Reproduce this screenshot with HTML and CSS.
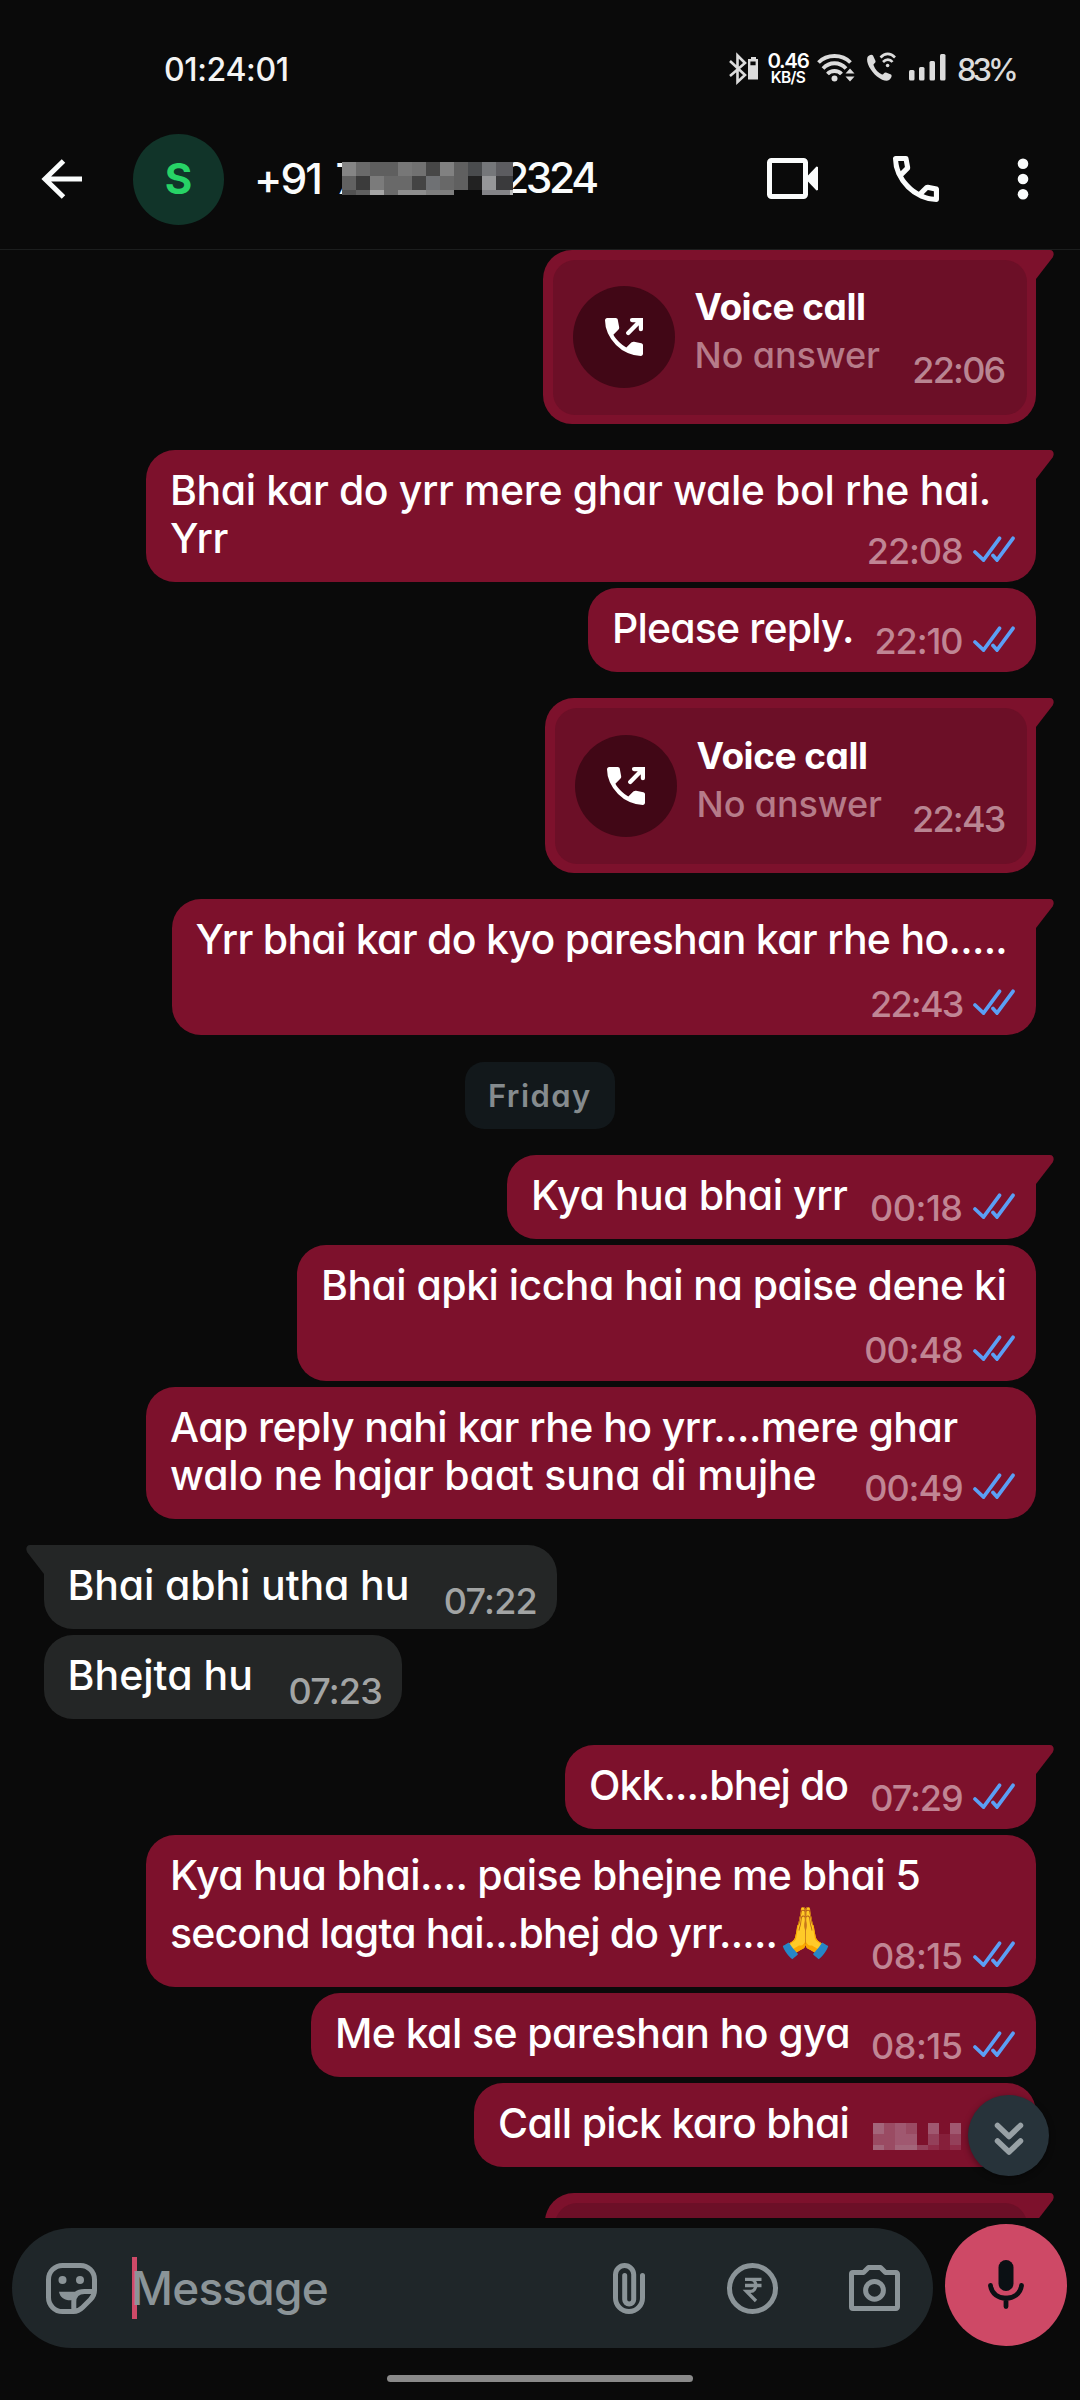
FILE: index.html
```html
<!DOCTYPE html>
<html lang="en">
<head>
<meta charset="utf-8">
<title>Chat</title>
<link rel="stylesheet" href="styles.css">
</head>
<body>
<svg class="defs" aria-hidden="true">
  <symbol id="tail" viewBox="0 0 18 30"><path d="M0 0H14C17.8 0 18.6 4.5 16.6 7.6L0 29Z"/></symbol>
  <symbol id="read" viewBox="0 0 42 26"><path d="M2 16L10.500 24 26.500 2.300M20 19.500L24 24 40 2.300"/></symbol>
  <symbol id="outgoing" viewBox="3 3 18 18">
    <path d="M19.95 21Q16.825 21 13.775 19.638T8.225 15.775T4.362 10.225Q3 7.175 3 4.05Q3 3.6 3.3 3.3T4.05 3H8.1Q8.45 3 8.725 3.238T9.05 3.8L9.7 7.3Q9.75 7.7 9.675 7.975T9.4 8.45L6.975 10.9Q7.475 11.825 8.163 12.688T9.675 14.35Q10.45 15.125 11.3 15.788T13.1 17L15.45 14.65Q15.675 14.425 16.038 14.313T16.75 14.25L20.2 14.95Q20.55 15.05 20.775 15.313T21 15.9V19.95Q21 20.4 20.7 20.7T19.95 21"/>
    <path class="arrow" d="M15.8 4H20V8.3M19.8 4.2L14 10.1"/>
  </symbol>
</svg>

<div class="phone">
  <div class="status">
    <span class="clock">01:24:01</span>
    <svg class="bt" viewBox="0 0 30 32"><path class="line" d="M1 8L16 22 8.5 29V2.5L16 10 1 23"/><path d="M22 4h5v2h2v20.5h-10V6h3zM21.4 8.4v3.8h5.2V8.4z" fill-rule="evenodd"/></svg>
    <span class="speed"><b>0.46</b><i>KB/S</i></span>
    <svg class="wifi" viewBox="0 0 38 32"><path class="arc" d="M1.5 9.5C10 .8 25 .8 33.5 9.5M6 15.5C12.500 8.500 22.500 8.500 29 15.500M10.500 21C14 17 21 17 24.500 21"/><circle cx="17.500" cy="25.500" r="3"/><path d="M28.500 20.500l4.500-5 4.500 5zM28.500 23.500l4.500 5 4.500-5z"/></svg>
    <svg class="wcall" viewBox="0 0 30 32"><path d="M1.500 4C2.500 2 6 .8 7 2.500L9.500 8C10 10 7.500 10.500 7.500 12 9 16.500 12.500 20 16 21.500 17.500 22 18 19 20 19.500L25 21.500C26.500 22.500 25 26 23 27 21 28.500 16 27.500 11 23.500 5 18.500-.5 9.500 1.500 4Z"/><path class="line" d="M14.500 4.500C19-.3 24.500-.3 29 4.500M17 9C20 5.800 24 5.800 26.500 9"/><circle cx="21.600" cy="12.500" r="1.800"/></svg>
    <svg class="signal" viewBox="0 0 37 32"><rect y="17" width="5.500" height="10.500" rx="1.500"/><rect x="10" y="14" width="5.500" height="13.500" rx="1.500"/><rect x="20.500" y="8" width="5.500" height="19.500" rx="1.500"/><rect x="31" y="1" width="5.500" height="26.500" rx="1.500"/></svg>
    <span class="battery">83%</span>
  </div>

  <header class="bar">
    <svg class="back" viewBox="0 0 41 40"><path d="M4 20H41M22.500 2L4 20 22.500 38"/></svg>
    <div class="avatar">S</div>
    <div class="title"><span class="code">+91 7</span>
      <svg class="mask" viewBox="0 0 171 33" shape-rendering="crispEdges">
        <path fill="#858585" d="M0 0h14v14H0z"/><path fill="#6a6a6a" d="M14 0h14v14H14z"/><path fill="#5f5f5f" d="M28 0h28v14H28z"/><path fill="#777" d="M56 0h14v14H56z"/><path fill="#717171" d="M70 0h14v14H70z"/><path fill="#474747" d="M84 0h14v14H84z"/><path fill="#818181" d="M98 0h14v14H98z"/><path fill="#606060" d="M112 0h14v14h-14z"/><path fill="#4a4c4e" d="M126 0h14v14h-14z"/><path fill="#75777a" d="M140 0h14v14h-14z"/><path fill="#5c5c60" d="M154 0h17v14h-17z"/>
        <path fill="#616161" d="M0 14h14v14H0z"/><path fill="#3b3b3b" d="M14 14h14v14H14z"/><path fill="#7b7b7b" d="M28 14h14v14H28z"/><path fill="#696969" d="M42 14h28v14H42z"/><path fill="#444" d="M70 14h14v14H70z"/><path fill="#6f7174" d="M84 14h14v14H84z"/><path fill="#686868" d="M98 14h14v14H98z"/><path fill="#606060" d="M112 14h14v14h-14z"/><path fill="#222" d="M126 14h14v14h-14z"/><path fill="#969799" d="M140 14h14v14h-14z"/><path fill="#3a3a3c" d="M154 14h17v14h-17z"/>
        <path fill="#515151" d="M0 28h14v5H0z"/><path fill="#606060" d="M14 28h14v5H14z"/><path fill="#a5a5a5" d="M28 28h14v5H28z"/><path fill="#6a6a6a" d="M42 28h14v5H42z"/><path fill="#8e8e8e" d="M56 28h28v5H56z"/><path fill="#7e7e7e" d="M84 28h28v5H84z"/><path fill="#0a0a0a" d="M112 28h28v5h-28z"/><path fill="#848488" d="M140 28h28v5h-28z"/><path fill="#bbb" d="M168 28h3v5h-3z"/>
      </svg>
      <span class="last">2324</span></div>
    <svg class="video" viewBox="0 0 51 41"><rect x="2.500" y="2.500" width="36" height="36" rx="2"/><path d="M40 18.500L49.500 8.500 51 9V32l-1.500.5L40 22.500z"/></svg>
    <svg class="call" viewBox="3 3 18 18"><path fill-rule="evenodd" d="M19.95 21Q16.825 21 13.775 19.638T8.225 15.775T4.362 10.225Q3 7.175 3 4.05Q3 3.6 3.3 3.3T4.05 3H8.1Q8.45 3 8.725 3.238T9.05 3.8L9.7 7.3Q9.75 7.7 9.675 7.975T9.4 8.45L6.975 10.9Q7.475 11.825 8.163 12.688T9.675 14.35Q10.45 15.125 11.3 15.788T13.1 17L15.45 14.65Q15.675 14.425 16.038 14.313T16.75 14.25L20.2 14.95Q20.55 15.05 20.775 15.313T21 15.9V19.95Q21 20.4 20.7 20.7T19.95 21M6.025 9L7.675 7.35 7.25 5H5.025Q5.15 6.025 5.375 7.025T6.025 9M14.975 17.95Q15.95 18.375 16.963 18.625T19 18.95V16.75L16.65 16.275Z"/></svg>
    <svg class="more" viewBox="0 0 12 42"><circle cx="6" cy="5.700" r="5.300"/><circle cx="6" cy="21" r="5.300"/><circle cx="6" cy="36.300" r="5.300"/></svg>
  </header>

  <main class="chat">
    <div class="msg out first voice">
      <svg class="tail"><use href="#tail"/></svg>
      <div class="card">
        <div class="disc"><svg><use href="#outgoing"/></svg></div>
        <div class="info"><strong>Voice call</strong><span>No answer</span></div>
        <time class="tight">22:06</time>
      </div>
    </div>
    <div class="msg out first two m-ghar"><svg class="tail"><use href="#tail"/></svg>
      <p>Bhai kar do yrr mere ghar wale bol rhe hai.<br>Yrr</p>
      <div class="meta"><time class="narrow">22:08</time><svg><use href="#read"/></svg></div></div>
    <div class="msg out m-please">
      <p>Please reply.</p>
      <div class="meta"><time class="narrow">22:10</time><svg><use href="#read"/></svg></div></div>
    <div class="msg out first voice second"><svg class="tail"><use href="#tail"/></svg>
      <div class="card">
        <div class="disc"><svg><use href="#outgoing"/></svg></div>
        <div class="info"><strong>Voice call</strong><span>No answer</span></div>
        <time class="tight">22:43</time>
      </div>
    </div>
    <div class="msg out first tall m-kyo"><svg class="tail"><use href="#tail"/></svg>
      <p>Yrr bhai kar do kyo pareshan kar rhe ho.....</p>
      <div class="meta"><time class="tight">22:43</time><svg><use href="#read"/></svg></div></div>

    <div class="day">Friday</div>

    <div class="msg out first m-hua"><svg class="tail"><use href="#tail"/></svg>
      <p>Kya hua bhai yrr</p>
      <div class="meta"><time>00:18</time><svg><use href="#read"/></svg></div></div>
    <div class="msg out tall m-apki">
      <p>Bhai apki iccha hai na paise dene ki</p>
      <div class="meta"><time class="narrow">00:48</time><svg><use href="#read"/></svg></div></div>
    <div class="msg out two m-reply">
      <p>Aap reply nahi kar rhe ho yrr....mere ghar<br><span class="loose">walo ne hajar baat suna di mujhe</span></p>
      <div class="meta"><time class="narrow">00:49</time><svg><use href="#read"/></svg></div></div>

    <div class="msg in first m-abhi"><svg class="tail"><use href="#tail"/></svg>
      <p>Bhai abhi utha hu</p>
      <div class="meta"><time>07:22</time></div></div>
    <div class="msg in m-bhejta">
      <p>Bhejta hu</p>
      <div class="meta"><time>07:23</time></div></div>

    <div class="msg out first m-okk"><svg class="tail"><use href="#tail"/></svg>
      <p>Okk....bhej do</p>
      <div class="meta"><time class="narrow">07:29</time><svg><use href="#read"/></svg></div></div>
    <div class="msg out emoji m-second">
      <p>Kya hua bhai.... paise bhejne me bhai 5<span class="line">second lagta hai...bhej do yrr.....<span class="pray">🙏</span></span></p>
      <div class="meta"><time>08:15</time><svg><use href="#read"/></svg></div></div>
    <div class="msg out m-kal">
      <p>Me kal se pareshan ho gya</p>
      <div class="meta"><time>08:15</time><svg><use href="#read"/></svg></div></div>
    <div class="msg out m-pick">
      <p>Call pick karo bhai</p>
      <svg class="blot" viewBox="0 0 88 27" shape-rendering="crispEdges">
        <path fill="#a3657a" d="M0 0h11v11H0zM0 22h11v5H0zM22 22h22v5H22z"/><path fill="#9a4b63" d="M11 0h11v27H11zM33 0h11v11H33zM0 11h11v11H0z"/><path fill="#a05870" d="M22 0h11v22H22zM33 11h11v11H33zM55 0h11v11H55zM77 0h11v11H77z"/><path fill="#94405a" d="M44 22h11v5H44zM55 11h11v11H55zM77 11h11v11H77z"/><path fill="#8f2c48" d="M55 22h11v5H55zM77 22h11v5H77z"/><path fill="#861f3a" d="M66 11h11v16H66z"/>
      </svg></div>

    <div class="msg out first voice second"><svg class="tail"><use href="#tail"/></svg><div class="card"></div></div>

    <div class="jump"><svg viewBox="0 0 30 34"><path d="M3.500 3.500L15 14.500 26.500 3.500M3.500 19L15 30 26.500 19"/></svg></div>
  </main>

  <footer class="foot">
    <div class="compose">
      <div class="field">
        <svg class="sticker" viewBox="0 0 51 51"><path class="o" d="M16.500 2.500h18a14 14 0 0 1 14 14v11c0 4-1.500 6.500-4 9l-8 8c-2.500 2.500-5 4-9 4h-11a14 14 0 0 1-14-14v-18a14 14 0 0 1 14-14zM48 28.500H38.500q-10.700 0-10.700 10.500V48"/><path d="M13 28.700H34L28 37C19.500 38.500 14 34.500 13 28.700z"/><circle cx="16.500" cy="17" r="4"/><circle cx="34" cy="17" r="4"/></svg>
        <div class="input"><i></i><span>Message</span></div>
        <svg class="clip" viewBox="0 0 32 51"><path class="o" d="M29.500 12.500V35a13.500 13.500 0 0 1-27 0V11.600a9.100 9.100 0 0 1 18.200 0V36.500a4.500 4.500 0 0 1-9 0V12.500"/></svg>
        <svg class="rupee" viewBox="0 0 51 51"><circle class="o" cx="25.500" cy="25.500" r="23"/><path class="thin" d="M18 16.300H34.500M18 22.500H34.500M18 16.300H23.500C30.500 16.300 30.500 28.300 23.500 28.300H19.500L29 38"/></svg>
        <svg class="camera" viewBox="0 0 51 46"><path class="o" d="M4 7.500H14.500L19.500 2.500H31.500L36.500 7.500H47A1.500 1.500 0 0 1 48.500 9V42A1.500 1.500 0 0 1 47 43.500H4A1.500 1.500 0 0 1 2.500 42V9A1.500 1.500 0 0 1 4 7.500Z"/><circle class="o" cx="25.500" cy="25.300" r="8.900"/></svg>
      </div>
      <div class="mic"><svg viewBox="0 0 36 49"><rect x="10.500" y="0" width="15" height="31" rx="7.500"/><path d="M2.500 25.500C4.500 42.500 31.500 42.500 33.500 25.500M18 38V46.500"/></svg></div>
    </div>
    <div class="home"></div>
  </footer>
</div>
</body>
</html>
```
FILE: styles.css
```css
* { box-sizing: border-box; }
body {
  margin: 0;
  background: #0a0a0a;
  color: #fff;
  font-family: Inter, "Noto Sans", sans-serif;
  font-feature-settings: "cv11";
}
svg { display: block; flex: none; overflow: visible; }
.defs { position: absolute; width: 0; height: 0; }
.phone {
  width: 1080px;
  height: 2400px;
  display: flex;
  flex-direction: column;
  overflow: hidden;
}

/* status bar */
.status {
  height: 110px;
  padding: 28px 65px 0 164px;
  display: flex;
  align-items: center;
  fill: #dcdcdc;
  color: #dcdcdc;
}
.status svg { height: 32px; }
.status .line { fill: none; stroke: #dcdcdc; stroke-width: 2.6; }
.status .arc { fill: none; stroke: #dcdcdc; stroke-width: 3.8; }
.clock { color: #f4f4f4; font-size: 32px; font-weight: 500; letter-spacing: -.35px; margin-right: auto; }
.bt { width: 30px; margin-right: 8px; }
.speed { width: 42px; margin-right: 8px; display: flex; flex-direction: column; align-items: center; color: #fff; white-space: nowrap; }
.speed b { font-size: 20.5px; font-weight: 600; letter-spacing: -1.3px; line-height: 18px; }
.speed i { font-size: 15.5px; font-style: normal; font-weight: 600; letter-spacing: -.7px; line-height: 16px; }
.wifi { width: 38px; margin-right: 11px; }
.wcall { width: 30px; margin-right: 13px; }
.signal { width: 37px; margin-right: 11px; }
.battery { width: 58px; font-size: 31px; font-weight: 500; letter-spacing: -4px; white-space: nowrap; }

/* app bar */
.bar {
  height: 140px;
  padding: 0 51px 2px 41px;
  display: flex;
  align-items: center;
  border-bottom: 1px solid #1c1e1e;
  fill: #fafcfc;
}
.back { width: 41px; height: 40px; fill: none; stroke: #fafcfc; stroke-width: 5; margin-right: 51px; }
.avatar {
  width: 91px; height: 91px; border-radius: 50%;
  background: #113429; color: #27d366;
  font-size: 42px; font-weight: 700; line-height: 90px; text-align: center;
  margin: 2px 31px 0 0;
}
.title { display: flex; align-items: center; margin-right: auto; font-size: 42.5px; font-weight: 500; line-height: 50px; white-space: nowrap; color: #fafcfc; }
.code { width: 88px; margin-left: -1px; letter-spacing: -1.9px; word-spacing: 5px; }
.mask { width: 171px; height: 33px; margin-top: -1px; z-index: 1; }
.last { margin-left: -10px; margin-top: -1px; letter-spacing: -3.4px; }
.video { width: 51px; height: 41px; margin-right: 75px; }
.video rect { fill: none; stroke: #fafcfc; stroke-width: 5; }
.call { width: 46px; height: 46px; margin-right: 78px; }
.more { width: 12px; height: 42px; }

/* conversation */
.chat {
  position: relative;
  height: 1968px;
  padding: 0 44px 0 43.5px;
  display: flex;
  flex-direction: column;
  overflow: hidden;
}
.msg {
  position: relative;
  flex: none;
  height: 84px;
  margin-top: 6px;
  padding: 16px 21.5px 13px 24px;
  border-radius: 29px;
  display: grid;
}
.msg.first { margin-top: 26px; }
.msg.first:first-child { margin-top: 0; }
.out { align-self: flex-end; background: #7d112c; fill: #7d112c; }
.in { align-self: flex-start; background: #242626; fill: #242626; padding: 16px 20px 10px 24px; }
.out.first { border-top-right-radius: 0; }
.in.first { border-top-left-radius: 0; }
.tail { position: absolute; top: 0; right: -17.5px; width: 18px; height: 30px; }
.in .tail { right: auto; left: -17.5px; transform: scaleX(-1); }
.msg p { grid-area: 1 / 1; margin: 0; font-size: 41px; font-weight: 540; line-height: 48px; white-space: nowrap; }
.meta { grid-area: 1 / 1; place-self: end; display: flex; align-items: flex-end; gap: 10px; }
.meta svg { width: 42px; height: 26px; margin-bottom: 7px; fill: none; stroke: #5b9ff5; stroke-width: 3.7; stroke-linecap: round; stroke-linejoin: miter; }
time { font-size: 36px; font-weight: 500; line-height: 36px; letter-spacing: -.5px; color: #c08594; }
time.narrow { letter-spacing: -1.1px; }
time.tight { letter-spacing: -1.8px; }
.in time { color: #a2a4a4; letter-spacing: -.8px; }
.two { height: 132px; }
.tall { height: 136px; }
.emoji { height: 152px; }
.line { display: block; line-height: 68px; letter-spacing: -.82px; }
.pray { display: inline-block; height: 48px; margin-left: -2px; font-size: 49px; line-height: 48px; vertical-align: -1px; }

.m-ghar { width: 890px; letter-spacing: -.38px; }
.m-please { width: 448px; letter-spacing: -.85px; }
.m-kyo { width: 864.500px; letter-spacing: -.71px; }
.m-hua { width: 529px; letter-spacing: -.45px; }
.m-apki { width: 739px; letter-spacing: -.53px; }
.m-reply { width: 890px; letter-spacing: -.57px; }
.m-reply .loose { letter-spacing: -.18px; }
.m-abhi { width: 513.500px; letter-spacing: -.12px; }
.m-bhejta { width: 358.500px; letter-spacing: .03px; }
.m-okk { width: 471px; letter-spacing: -.95px; }
.m-second { width: 890px; letter-spacing: -.58px; }
.m-kal { width: 725px; letter-spacing: -.58px; }
.m-pick { width: 562px; letter-spacing: -.67px; }

.blot { grid-area: 1 / 1; place-self: end; width: 88px; height: 27px; margin: 0 54px 4px 0; }

/* voice call bubble */
.voice { width: 493px; height: 174px; padding: 9.500px; }
.voice.second { width: 491px; height: 175px; }
.card { border-radius: 22px; background: #6c0f27; padding: 0 22px 0 20px; display: flex; align-items: center; }
.disc { width: 102px; height: 102px; border-radius: 50%; background: #410716; display: grid; place-items: center; margin-right: 20px; }
.disc svg { width: 38px; height: 38px; fill: #fff; }
.arrow { fill: none; stroke: #fff; stroke-width: 2; stroke-linecap: round; }
.info { display: flex; flex-direction: column; padding-bottom: 13px; margin-right: auto; }
.info strong { font-size: 37px; line-height: 49px; letter-spacing: -.48px; }
.info span { font-size: 36px; line-height: 48px; font-weight: 500; letter-spacing: -.1px; color: #b67b89; }
.card time { align-self: flex-end; margin-bottom: 26.500px; color: #b98592; }

.day {
  align-self: center;
  flex: none;
  width: 150px; height: 67px;
  margin-top: 27px;
  border-radius: 19px;
  background: #12181b;
  color: #858b8e;
  font-size: 31px; font-weight: 600; line-height: 68px; text-align: center; letter-spacing: 1.4px;
}

.jump {
  position: absolute;
  left: 968px; top: 1845px;
  width: 81px; height: 81px; border-radius: 50%;
  background: #27333a;
  box-shadow: 0 2px 6px rgba(0, 0, 0, .4);
  display: grid; place-items: center;
}
.jump svg { width: 30px; height: 34px; fill: none; stroke: #98a1a5; stroke-width: 5.500; stroke-linecap: round; stroke-linejoin: round; margin-top: 6px; }

/* composer */
.foot { flex: 1; padding: 6px 13px 18px 12px; display: flex; flex-direction: column; justify-content: space-between; align-items: center; }
.compose { width: 100%; display: flex; justify-content: space-between; align-items: flex-start; }
.field {
  width: 921px; height: 120px;
  margin-top: 4px;
  padding: 0 33px 0 34px;
  border-radius: 60px;
  background: #1f2629;
  display: flex;
  align-items: center;
  fill: #8b9498;
}
.o, .thin { fill: none; stroke: #8b9498; stroke-width: 5; stroke-linecap: round; stroke-linejoin: round; }
.thin { stroke-width: 3.300; stroke-linecap: butt; stroke-linejoin: miter; }
.sticker { width: 51px; height: 51px; margin-right: 35px; }
.input { display: flex; align-items: center; margin-right: auto; font-size: 46px; font-weight: 500; letter-spacing: -.8px; color: #8b9498; }
.input i { width: 5px; height: 62px; background: #cf4a68; margin-right: -6px; }
.clip { width: 32px; height: 51px; margin-right: 82px; }
.rupee { width: 51px; height: 51px; margin-right: 71px; }
.camera { width: 51px; height: 46px; }
.mic { width: 122px; height: 122px; border-radius: 50%; background: #ce4966; display: grid; place-items: center; }
.mic svg { width: 36px; height: 49px; margin-top: -2px; fill: #0b1014; }
.mic path { fill: none; stroke: #0b1014; stroke-width: 4.800; stroke-linecap: round; }
.home { width: 306px; height: 7px; border-radius: 4px; background: #8a8a8a; }
```
